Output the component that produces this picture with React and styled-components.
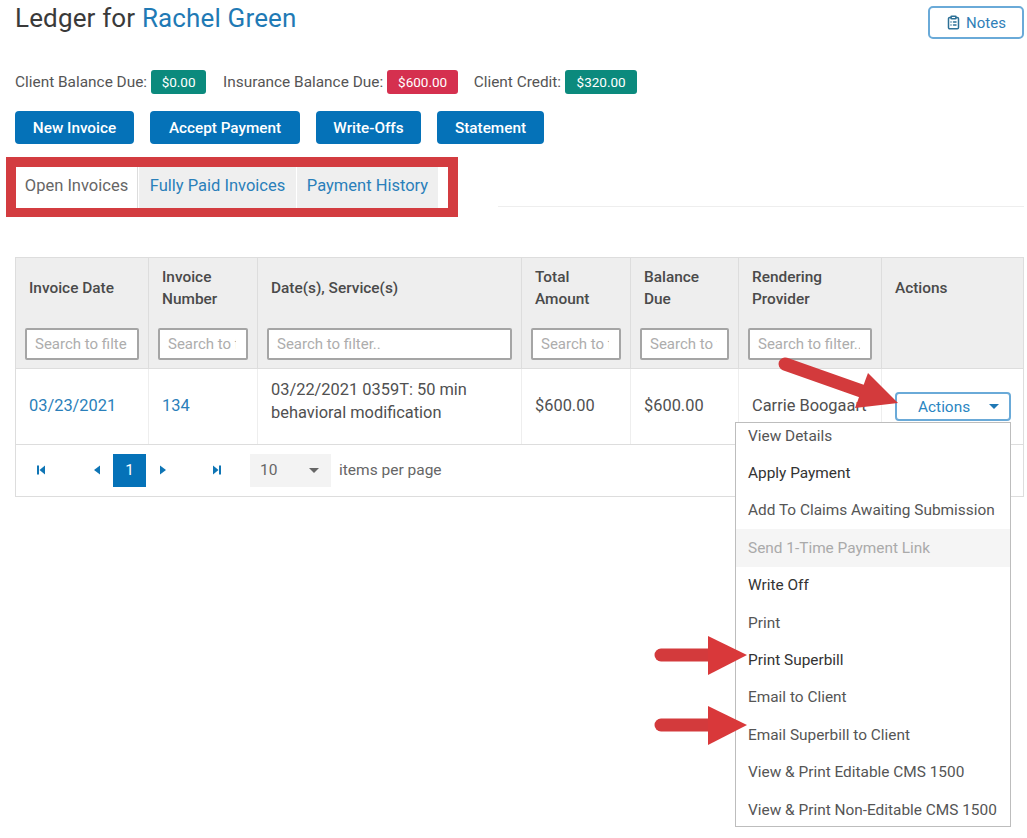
import React from 'react'
import styled, { createGlobalStyle } from 'styled-components'
import { ClipboardList } from 'lucide-react'

const GlobalStyle = createGlobalStyle`
  * {
    box-sizing: border-box;
  }
  body {
    margin: 0;
    background: #fff;
    font-family: Roboto, "Liberation Sans", sans-serif;
    color: #555;
  }
`

const columns = [
  { label: 'Invoice Date', filter: true },
  { label: 'Invoice Number', filter: true },
  { label: 'Date(s), Service(s)', filter: true },
  { label: 'Total Amount', filter: true },
  { label: 'Balance Due', filter: true },
  { label: 'Rendering Provider', filter: true },
  { label: 'Actions', filter: false }
]

const menuItems = [
  { label: 'View Details' },
  { label: 'Apply Payment', dark: true },
  { label: 'Add To Claims Awaiting Submission' },
  { label: 'Send 1-Time Payment Link', disabled: true },
  { label: 'Write Off', dark: true },
  { label: 'Print' },
  { label: 'Print Superbill', dark: true },
  { label: 'Email to Client' },
  { label: 'Email Superbill to Client' },
  { label: 'View & Print Editable CMS 1500' },
  { label: 'View & Print Non-Editable CMS 1500' }
]

const PagerIcon = ({ kind }) => {
  const shapes = {
    first: <path d='M2 1.5h2v9H2zM10 1.5v9L4.5 6z' />,
    prev: <path d='M9 1.5v9L3 6z' />,
    next: <path d='M3 1.5v9L9 6z' />,
    last: <path d='M8 1.5h2v9H8zM2 1.5v9L7.5 6z' />
  }
  return <svg width='12' height='12' viewBox='0 0 12 12' fill='#0f75b5'>{shapes[kind]}</svg>
}

const App = () => (
  <Page>
    <GlobalStyle />
    <TitleRow>
      <Title>Ledger for <TitleName>Rachel Green</TitleName></Title>
      <NotesButton><ClipboardList size={15} strokeWidth={2.4} />Notes</NotesButton>
    </TitleRow>

    <Balances>
      <BalanceLabel>Client Balance Due:</BalanceLabel>
      <Badge $width={55}>$0.00</Badge>
      <BalanceLabel $gap={17}>Insurance Balance Due:</BalanceLabel>
      <Badge $width={71} $tone='red'>$600.00</Badge>
      <BalanceLabel $gap={15.5}>Client Credit:</BalanceLabel>
      <Badge $width={72}>$320.00</Badge>
    </Balances>

    <Actions>
      <PrimaryButton $width={119}>New Invoice</PrimaryButton>
      <PrimaryButton $width={150}>Accept Payment</PrimaryButton>
      <PrimaryButton $width={105}>Write-Offs</PrimaryButton>
      <PrimaryButton $width={107}>Statement</PrimaryButton>
    </Actions>

    <TabRow>
      <TabFrame>
        <Tab $width={122} $active>Open Invoices</Tab>
        <Tab $width={157}>Fully Paid Invoices</Tab>
        <Tab $width={141}>Payment History</Tab>
      </TabFrame>
      <TabRule />
    </TabRow>

    <Table>
      <HeaderRow>
        {columns.map(col => (
          <HeaderCell key={col.label}>
            <HeaderLabel>{col.label}</HeaderLabel>
            {col.filter && <Filter placeholder='Search to filter..' />}
          </HeaderCell>
        ))}
      </HeaderRow>
      <BodyRow>
        <BodyCell><BodyLink>03/23/2021</BodyLink></BodyCell>
        <BodyCell><BodyLink>134</BodyLink></BodyCell>
        <BodyCell $raised>03/22/2021 0359T: 50 min<br />behavioral modification</BodyCell>
        <BodyCell>$600.00</BodyCell>
        <BodyCell>$600.00</BodyCell>
        <BodyCell>Carrie Boogaart</BodyCell>
        <ActionsCell>
          <ActionsButton>Actions<Caret /></ActionsButton>
        </ActionsCell>
      </BodyRow>
      <Footer>
        <PagerButton><PagerIcon kind='first' /></PagerButton>
        <PagerButton $gap={23}><PagerIcon kind='prev' /></PagerButton>
        <PageNumber>1</PageNumber>
        <PagerButton><PagerIcon kind='next' /></PagerButton>
        <PagerButton $gap={21}><PagerIcon kind='last' /></PagerButton>
        <PageSize>10<Caret $grey /></PageSize>
        <PerPage>items per page</PerPage>
      </Footer>
    </Table>

    <Menu>
      <MenuList>
        {menuItems.map(item => (
          <MenuItem key={item.label} $dark={item.dark} $disabled={item.disabled}>{item.label}</MenuItem>
        ))}
      </MenuList>
    </Menu>

    <Arrows width='1027' height='838' viewBox='0 0 1027 838'>
      <line x1='785' y1='364' x2='870' y2='394' stroke='#d33a3c' strokeWidth='13' strokeLinecap='round' />
      <polygon points='868,373 898,403 855,408' fill='#d33a3c' />
      <line x1='661' y1='655' x2='712' y2='655' stroke='#d33a3c' strokeWidth='13' strokeLinecap='round' />
      <polygon points='708,636 747,655 708,675' fill='#d9383a' />
      <line x1='661' y1='725' x2='712' y2='725' stroke='#d33a3c' strokeWidth='13' strokeLinecap='round' />
      <polygon points='708,706 747,725 708,745' fill='#d9383a' />
    </Arrows>
  </Page>
)

const Page = styled.div`
  position: relative;
  width: 1027px;
  height: 838px;
  padding: 0 3px 0 15px;
  overflow: hidden;
`

const TitleRow = styled.div`
  display: flex;
  justify-content: space-between;
  height: 39px;
`

const Title = styled.h1`
  margin: 0;
  font-size: 26px;
  font-weight: 400;
  letter-spacing: 0.15px;
  line-height: 36px;
  color: #3a3a3a;
`

const TitleName = styled.span`
  color: #1f7ab5;
`

const NotesButton = styled.button`
  display: flex;
  align-items: center;
  justify-content: center;
  gap: 5px;
  align-self: flex-end;
  width: 96px;
  height: 33px;
  padding: 0;
  border: 2px solid #6aaad8;
  border-radius: 5px;
  background: #fff;
  color: #2f80b8;
  font: 400 15px Roboto, sans-serif;

  svg {
    color: #2c7096;
  }
`

const Balances = styled.div`
  display: flex;
  align-items: center;
  height: 24px;
  margin-top: 31px;
`

const BalanceLabel = styled.span`
  margin-left: ${p => p.$gap || 0}px;
  margin-right: 4px;
  font-size: 15.4px;
  color: #555;
`

const Badge = styled.span`
  display: flex;
  align-items: center;
  justify-content: center;
  width: ${p => p.$width}px;
  height: 24px;
  border-radius: 3px;
  background: ${p => (p.$tone === 'red' ? '#d5304f' : '#0b8a7d')};
  color: #fff;
  font-size: 13.5px;
  font-weight: 400;
`

const Actions = styled.div`
  display: flex;
  gap: 16px;
  margin-top: 17px;
`

const PrimaryButton = styled.button`
  width: ${p => p.$width}px;
  height: 33px;
  padding: 0;
  border: 0;
  border-radius: 4px;
  background: #0572b8;
  color: #fff;
  font: 500 15.3px Roboto, sans-serif;
`

const TabRow = styled.div`
  display: flex;
  align-items: flex-end;
  margin-top: 13px;
  margin-left: -9px;
`

const TabFrame = styled.div`
  display: flex;
  gap: 1px;
  width: 452px;
  height: 60px;
  border: 10px solid #d33c40;
  border-bottom-width: 9px;
  background: #fff;
`

const Tab = styled.div`
  display: flex;
  align-items: center;
  justify-content: center;
  width: ${p => p.$width}px;
  height: 100%;
  padding-bottom: 4px;
  background: ${p => (p.$active ? '#fff' : '#efefef')};
  border-right: ${p => (p.$active ? '1px solid #ddd' : '0')};
  color: ${p => (p.$active ? '#666' : '#2a7fba')};
  font-size: 16.5px;
`

const TabRule = styled.div`
  flex: 1;
  height: 1px;
  margin: 0 0 10px 40px;
  background: #eee;
`

const Table = styled.div`
  width: 1009px;
  margin-top: 40px;
  border: 1px solid #ddd;
`

const HeaderRow = styled.div`
  display: grid;
  grid-template-columns: 133px 109px 264px 109px 108px 143px 141px;
  height: 111px;
  background: #eee;
  border-bottom: 1px solid #ddd;
`

const HeaderCell = styled.div`
  padding: 8px 9px 0 9px;
  border-right: 1px solid #ddd;

  &:last-child {
    border-right: 0;
  }
`

const HeaderLabel = styled.div`
  display: flex;
  align-items: center;
  height: 44px;
  padding: 0 6px 0 4px;
  font-size: 15.4px;
  font-weight: 500;
  line-height: 22px;
  color: #4a4a4a;
`

const Filter = styled.input`
  display: block;
  width: 100%;
  height: 32px;
  margin-top: 18px;
  padding: 0 10px 0 8px;
  border: 2px solid #a5a5a5;
  border-radius: 2px;
  background: #fff;
  font: 400 15px Roboto, sans-serif;

  &::placeholder {
    color: #adadad;
    opacity: 1;
  }
`

const BodyRow = styled.div`
  display: grid;
  grid-template-columns: 133px 109px 264px 109px 108px 143px 141px;
  height: 76px;
  border-bottom: 1px solid #ddd;
`

const BodyCell = styled.div`
  display: flex;
  align-items: center;
  padding: 0 13px ${p => (p.$raised ? '11px' : '3px')};
  border-right: 1px solid #eee;
  font-size: 16.4px;
  line-height: 23px;
  color: #505050;
`

const BodyLink = styled.span`
  color: #2a7fba;
`

const ActionsCell = styled.div`
  display: flex;
  align-items: center;
  padding: 0 0 0 13px;
`

const ActionsButton = styled.button`
  display: flex;
  align-items: center;
  justify-content: space-between;
  width: 116px;
  height: 29px;
  padding: 0 10px 0 21px;
  border: 2px solid #6aaad8;
  border-radius: 4px;
  background: #fff;
  color: #2a86c2;
  font: 400 15.4px Roboto, sans-serif;
`

const Caret = styled.span`
  width: 0;
  height: 0;
  border-left: 5px solid transparent;
  border-right: 5px solid transparent;
  border-top: 5px solid ${p => (p.$grey ? '#666' : '#1f78b5')};
`

const Footer = styled.div`
  display: flex;
  align-items: center;
  height: 51px;
  padding: 0 0 1px 8px;
`

const PagerButton = styled.div`
  display: flex;
  align-items: center;
  justify-content: center;
  width: 33px;
  height: 33px;
  margin-left: ${p => p.$gap || 0}px;
`

const PageNumber = styled.div`
  display: flex;
  align-items: center;
  justify-content: center;
  width: 33px;
  height: 33px;
  background: #0572b8;
  color: #fff;
  font-size: 15.5px;
`

const PageSize = styled.div`
  display: flex;
  align-items: center;
  justify-content: space-between;
  width: 81px;
  height: 33px;
  margin-left: 17px;
  padding: 0 12px 0 10px;
  background: #f3f3f3;
  font-size: 15.5px;
  color: #666;
`

const PerPage = styled.span`
  margin-left: 8px;
  font-size: 15.5px;
  color: #666;
`

const Menu = styled.div`
  position: absolute;
  top: 422px;
  left: 735px;
  width: 276px;
  height: 405px;
  overflow: hidden;
  border: 1px solid #bdbdbd;
  background: #fff;
`

const MenuList = styled.div`
  margin-top: -6px;
`

const MenuItem = styled.div`
  display: flex;
  align-items: center;
  height: 37.4px;
  padding-left: 12px;
  background: ${p => (p.$disabled ? '#f5f5f5' : 'transparent')};
  color: ${p => (p.$disabled ? '#aaa' : p.$dark ? '#333' : '#555')};
  font-size: 15.4px;
  white-space: nowrap;
`

const Arrows = styled.svg`
  position: absolute;
  top: 0;
  left: 0;
  pointer-events: none;
`

export default App
